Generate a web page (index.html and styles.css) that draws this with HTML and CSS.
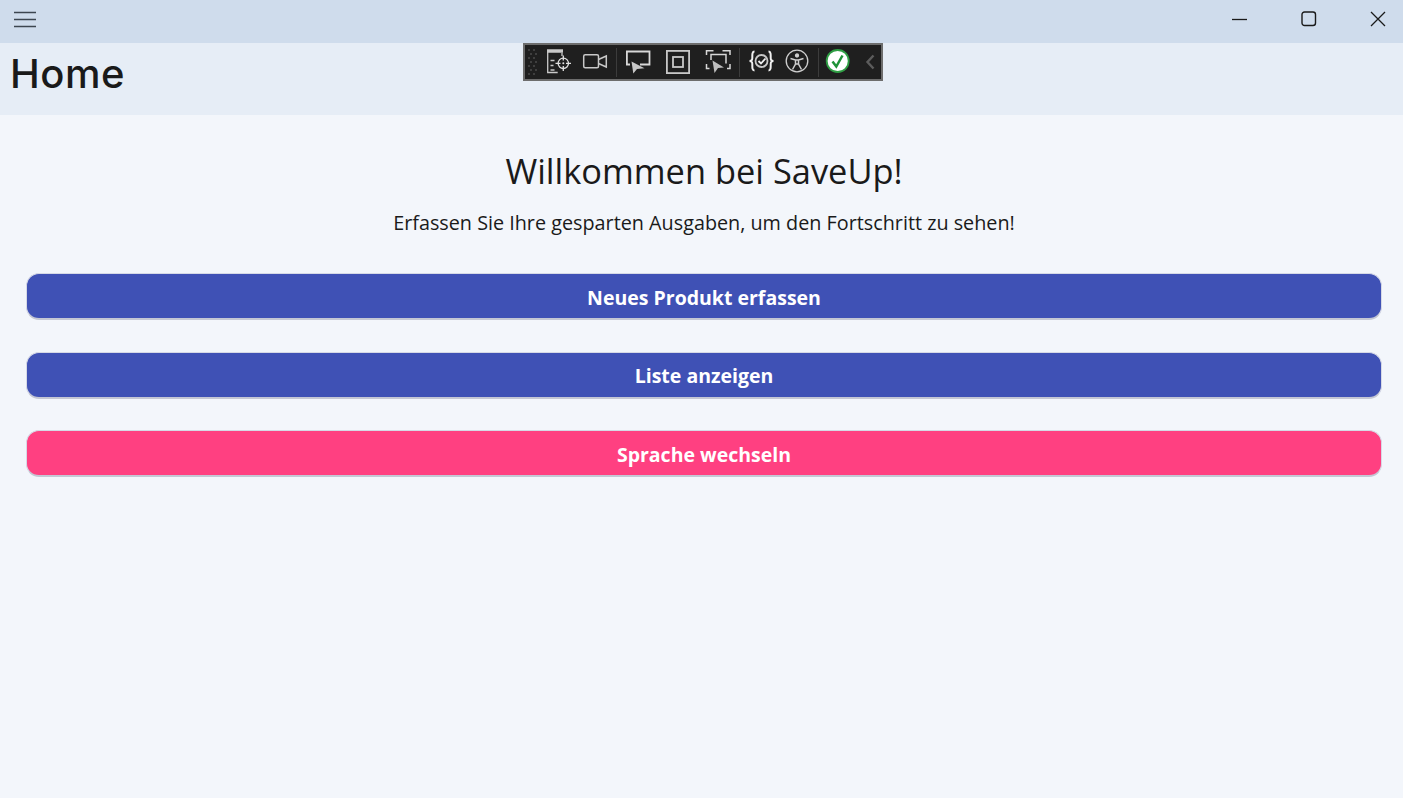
FILE: index.html
```html
<!DOCTYPE html>
<html lang="de">
<head>
    <meta charset="UTF-8">
    <title>SaveUp</title>
    <link rel="stylesheet" href="styles.css">
</head>
<body>

<div class="titlebar">
    <button class="menu-btn" aria-label="Menu">
        <svg width="24" height="18" viewBox="0 0 24 18"><path d="M1 2.5h22M1 9.5h22M1 16.5h22" stroke="#3d4650" stroke-width="1.3" fill="none"/></svg>
    </button>
    <div class="window-btns">
        <svg width="16" height="16" viewBox="0 0 16 16"><path d="M0 8.500h15" stroke="#1a1a1a" stroke-width="1.3"/></svg>
        <svg width="16" height="16" viewBox="0 0 16 16"><rect x="1" y="1" width="13.500" height="13.500" rx="2.500" stroke="#1a1a1a" stroke-width="1.4" fill="none"/></svg>
        <svg width="16" height="16" viewBox="0 0 16 16"><path d="M1 1l14 14M15 1L1 15" stroke="#1a1a1a" stroke-width="1.3"/></svg>
    </div>
</div>

<div class="page-header">
    <h2>Home</h2>
</div>

<div class="debug-toolbar">
    <svg class="grip" width="9" height="28" viewBox="0 0 9 28"><path d="M0 1h2v2H0zM5 1h2v2H5zM2 5h2v2H2zM7 5h2v2H7zM0 9h2v2H0zM5 9h2v2H5zM2 13h2v2H2zM7 13h2v2H7zM0 17h2v2H0zM5 17h2v2H5zM2 21h2v2H2zM7 21h2v2H7zM0 25h2v2H0zM5 25h2v2H5z" fill="#3f3f3f"/></svg>

    <div class="tool-group wide-first">
        <svg width="26" height="26" viewBox="0 0 26 26" fill="none" stroke="#c8c8c8" stroke-width="1.300"><path d="M1 2h16" stroke-width="3.500"/><path d="M1.700 3v20.500h10M16 4v3"/><path d="M4.500 11.500h4M4.500 16.500h3M4.500 21h4"/><circle cx="17.300" cy="14.300" r="5.200" stroke="#e0e0e0"/><path d="M17.300 6.500v5M17.300 17v5M9.500 14.300h5M20 14.300h5" stroke="#e0e0e0"/><circle cx="17.300" cy="14.300" r="1" fill="#e0e0e0" stroke="none"/></svg>
        <svg width="26" height="26" viewBox="0 0 26 26" fill="none" stroke="#c8c8c8" stroke-width="1.500"><rect x="1.700" y="5.800" width="14.800" height="13" rx="1.500"/><path d="M16.500 10.500l7.800-3.500v11l-7.800-3.500"/></svg>
    </div>
    <span class="sep"></span>

    <div class="tool-group wide">
        <svg width="26" height="26" viewBox="0 0 26 26" fill="none" stroke="#d8d8d8" stroke-width="1.800"><path d="M5 15.500H1.900V2.500h22.600v13H15"/><path d="M6.500 12.500l1.800 12 3.700-4.500 7.500-.8z" fill="#c8c8c8" stroke="none"/></svg>
        <svg width="26" height="26" viewBox="0 0 26 26" fill="none" stroke="#c8c8c8" stroke-width="1.800"><rect x="1.900" y="1.900" width="22.200" height="22.200"/><rect x="8" y="8" width="10" height="10"/></svg>
        <svg width="26" height="26" viewBox="0 0 26 26" fill="none" stroke="#d8d8d8" stroke-width="1.500"><path d="M1.500 6V1.800h7M17.500 1.800h7.500V6M1.500 15v4.500h3M25 15v4.500h-3"/><path d="M6 11V5.500h15v9"/><path d="M7.500 11.500l2 12.500 3.500-5 6-.5z" fill="#bdbdbd" stroke="none"/></svg>
    </div>
    <span class="sep"></span>

    <div class="tool-group">
        <svg width="26" height="26" viewBox="0 0 26 26" fill="none" stroke="#f0f0f0" stroke-width="2"><path d="M6.500 2.500C3 2.500 5 9 4 10.700c-.5 1-1.500 1.300-2.500 1.300 1 0 2 .3 2.500 1.300 1 1.700-1 8.200 2.500 8.200M20.500 2.500c3.500 0 1.500 6.500 2.500 8.200.5 1 1.500 1.300 2.500 1.300-1 0-2 .3-2.500 1.300-1 1.700 1 8.200-2.500 8.200"/><circle cx="13.500" cy="12" r="6" stroke="#c8c8c8" stroke-width="1.800"/><path d="M10.500 12l2.500 2.500 4.500-5" stroke-width="1.800"/></svg>
        <svg width="26" height="26" viewBox="0 0 26 26" fill="none" stroke="#cfcfcf" stroke-width="1.300"><circle cx="13" cy="12" r="10.800"/><circle cx="13" cy="6.500" r="1.500" fill="#cfcfcf"/><path d="M6.500 9.500l5 1.500h3l5-1.500M11.500 11v4l-3 5.500M14.500 11v4l3 5.500M11.500 15h3" stroke-width="1.500"/></svg>
    </div>
    <span class="sep"></span>

    <div class="tool-group wide last-group">
        <svg width="26" height="26" viewBox="0 0 26 26" fill="none"><circle cx="12.700" cy="12" r="11" fill="#fff" stroke="#2f9e44" stroke-width="1.800"/><path d="M7.500 12.500l3.800 5 6.200-11" stroke="#1f9238" stroke-width="2.500"/></svg>
        <svg width="10" height="16" viewBox="0 0 10 16" fill="none"><path d="M8.500 1.500L2.500 8l6 6.500" stroke="#5c5c5c" stroke-width="2.400"/></svg>
    </div>
</div>

<div class="content">
    <h1>Willkommen bei SaveUp!</h1>
    <p>Erfassen Sie Ihre gesparten Ausgaben, um den Fortschritt zu sehen!</p>
    <button class="action primary">Neues Produkt erfassen</button>
    <button class="action primary">Liste anzeigen</button>
    <button class="action accent">Sprache wechseln</button>
</div>

</body>
</html>
```

FILE: styles.css
```css
* {
    box-sizing: border-box;
    margin: 0;
    padding: 0;
}

body {
    font-family: 'Open Sans', 'Noto Sans', sans-serif;
    background-color: #f3f6fb;
    color: #1a1a1a;
    height: 100vh;
    overflow: hidden;
    position: relative;
}

.titlebar {
    height: 43px;
    background-color: #cfdcec;
    display: flex;
    justify-content: space-between;
    align-items: center;
    padding: 0 17px 6px 13px;
}

.menu-btn {
    background: none;
    border: none;
    display: flex;
}

.window-btns {
    display: flex;
    gap: 53px;
}

.page-header {
    height: 72px;
    background-color: #e6edf6;
    padding: 5px 10px;
}

.page-header h2 {
    font-family: 'Inter', sans-serif;
    font-size: 40px;
    font-weight: 500;
    letter-spacing: 0.5px;
    line-height: 52px;
    color: #1a1a1a;
}

.debug-toolbar {
    position: absolute;
    top: 43px;
    left: 523px;
    width: 360px;
    height: 38px;
    background-color: #1f1f1f;
    border: 2px solid #6d6d6d;
    display: flex;
    align-items: center;
    padding-left: 3px;
}

.debug-toolbar svg {
    flex: none;
}

.tool-group {
    display: flex;
    align-items: center;
    gap: 10px;
}

.tool-group.wide {
    gap: 14px;
}

.wide-first {
    margin-left: 9px;
}

.last-group {
    margin-left: -2px;
}

.sep {
    width: 1px;
    height: 29px;
    background-color: #3c3c3c;
    margin: 0 8px;
}

.content {
    display: flex;
    flex-direction: column;
    padding: 32px 21px 0 26px;
}

.content h1 {
    font-size: 34.400px;
    font-weight: 400;
    line-height: 48px;
    text-align: center;
    margin-bottom: 14px;
}

.content p {
    font-size: 19.800px;
    line-height: 28px;
    text-align: center;
    margin-bottom: 36px;
}

.action {
    height: 47px;
    margin-bottom: 31.500px;
    padding-top: 2px;
    border-style: solid;
    border-width: 1px 1px 2px;
    border-color: #d6d9e6 #d6d9e6 #c4c7d4;
    border-radius: 13px;
    font-family: inherit;
    font-size: 19.500px;
    font-weight: 700;
    color: #fff;
}

.primary {
    background-color: #3f51b5;
}

.accent {
    background-color: #ff4081;
}
```
